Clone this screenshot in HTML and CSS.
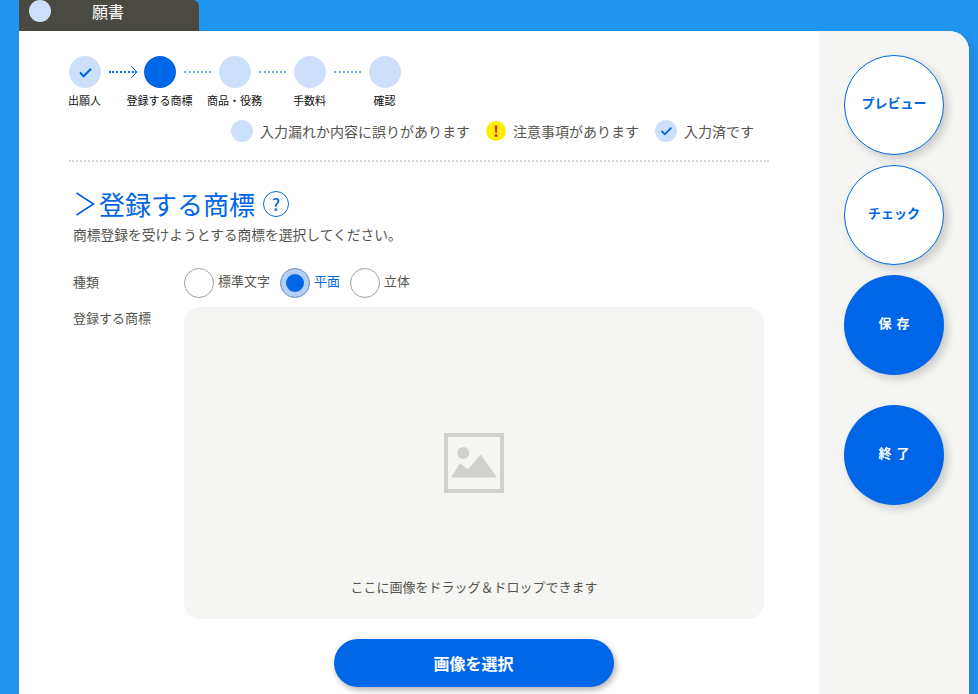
FILE: index.html
```html
<!DOCTYPE html>
<html lang="ja">
<head>
<meta charset="utf-8">
<title>願書</title>
<link rel="stylesheet" href="styles.css">
</head>
<body>
<div class="page">
  <div class="tab"><span class="tab-dot"></span><span class="tab-title">願書</span></div>
  <div class="card">
    <main class="main">
      <div class="track">
        <span class="step step-done"><svg class="check" viewBox="0 0 16 12" width="15" height="11"><path d="M2 6l4 4 8-8" fill="none" stroke="#0066e8" stroke-width="2.400"/></svg></span>
        <span class="link link-done"><svg class="arrow" viewBox="0 0 8 14" width="8" height="14"><path d="M1 1l6 6-6 6" fill="none" stroke="#0066e8" stroke-width="1"/></svg></span>
        <span class="step step-current"></span>
        <span class="link"></span>
        <span class="step"></span>
        <span class="link"></span>
        <span class="step"></span>
        <span class="link"></span>
        <span class="step"></span>
      </div>
      <div class="labels">
        <span>出願人</span><span>登録する商標</span><span>商品・役務</span><span>手数料</span><span>確認</span>
      </div>
      <div class="legend">
        <span class="legend-item"><span class="legend-dot"></span>入力漏れか内容に誤りがあります</span>
        <span class="legend-item legend-warn"><span class="warn-dot">!</span>注意事項があります</span>
        <span class="legend-item"><span class="legend-dot legend-check"><svg viewBox="0 0 14 11" width="13" height="10"><path d="M1.500 5.500l3.800 3.600 7-7.400" fill="none" stroke="#0066e8" stroke-width="2"/></svg></span>入力済です</span>
      </div>
      <hr class="rule">
      <h1 class="heading">
        <svg class="chevron" viewBox="0 0 20 26" width="20" height="26"><path d="M1.500 2l17 11-17 11" fill="none" stroke="#0066e8" stroke-width="1.700"/></svg>
        <span>登録する商標</span><span class="help">?</span>
      </h1>
      <p class="lead">商標登録を受けようとする商標を選択してください。</p>
      <div class="row row-kind">
        <span class="row-label">種類</span>
        <div class="radios">
          <span class="radio-item"><span class="radio"></span><span class="radio-text">標準文字</span></span>
          <span class="radio-item radio-on"><span class="radio"></span><span class="radio-text">平面</span></span>
          <span class="radio-item"><span class="radio"></span><span class="radio-text">立体</span></span>
        </div>
      </div>
      <div class="row row-mark">
        <span class="row-label">登録する商標</span>
        <div class="drop">
          <svg class="placeholder" viewBox="0 0 60 60" width="60" height="60">
            <rect x="2" y="2" width="56" height="56" fill="none" stroke="#d0d0ce" stroke-width="4"/>
            <circle cx="19.300" cy="20" r="6" fill="#d0d0ce"/>
            <path d="M8 44L16 31 24 37 36.500 22 52 44z" fill="#d0d0ce" stroke="#d0d0ce" stroke-width="1" stroke-linejoin="round"/>
          </svg>
          <p class="drop-text">ここに画像をドラッグ＆ドロップできます</p>
        </div>
      </div>
      <div class="action"><button class="select-btn">画像を選択</button></div>
    </main>
    <aside class="side">
      <button class="round round-outline">プレビュー</button>
      <button class="round round-outline">チェック</button>
      <button class="round round-solid">保 存</button>
      <button class="round round-solid round-gap">終 了</button>
    </aside>
  </div>
</div>
</body>
</html>
```
FILE: styles.css
```css
* { box-sizing: border-box; }
html, body { margin: 0; height: 100%; }
body {
  background: #2196f0;
  overflow: hidden;
  font-family: "Noto Sans CJK JP", "Noto Sans", sans-serif;
  color: #55554e;
}
.page { width: 978px; height: 694px; padding: 0 9px 0 19px; overflow: hidden; }
.tab {
  width: 180px; height: 31px; background: #4a4a42;
  border-top-right-radius: 6px;
  display: flex; align-items: flex-start; padding-left: 10px; color: #fff;
}
.tab-dot { width: 22px; height: 22px; border-radius: 50%; background: #cde0fb; }
.tab-title { margin-left: 41px; font-size: 16px; line-height: 22px; }
.card {
  display: flex; height: 700px; background: #fff;
  border-top-right-radius: 20px; overflow: hidden;
  box-shadow: 4px 4px 10px rgba(0,0,0,.12);
}
.main { width: 800px; padding: 25px 50px 0 50px; }
.side {
  width: 150px; background: #f5f5f3; padding-top: 24px;
  display: flex; flex-direction: column; align-items: center; gap: 10px;
}
.track { display: flex; align-items: center; height: 32px; }
.step {
  width: 32px; height: 32px; border-radius: 50%; background: #cde0fb;
  display: flex; align-items: center; justify-content: center; flex: none;
}
.step-current { background: #0066e8; }
.link {
  width: 27px; margin: 0 8px; height: 0; border-top: 2px dotted #6aabf2; position: relative; flex: none;
}
.link-done { width: 28px; border-top-color: #0066e8; margin-right: 7px; }
.arrow { position: absolute; right: -1px; top: -8px; }
.labels { display: flex; margin: 5px 0 0 -22px; height: 14px; }
.labels span { width: 75px; text-align: center; font-size: 11px; line-height: 14px; color: #111; white-space: nowrap; }
.legend { display: flex; justify-content: flex-end; align-items: center; margin: 13px 15px 0 0; height: 22px; font-size: 14px; }
.legend-item { display: flex; align-items: center; margin-left: 16px; white-space: nowrap; }
.legend-dot { width: 22px; height: 22px; border-radius: 50%; background: #cde0fb; margin-right: 7px; display: flex; align-items: center; justify-content: center; }
.warn-dot { width: 20px; height: 20px; border-radius: 50%; background: #ffee00; color: #e0102a; margin-right: 7px; font-size: 15px; font-weight: 700; line-height: 20px; text-align: center; }
.rule { border: 0; border-top: 2px dotted #d6d6d4; margin: 18px 0 0; }
.heading { display: flex; align-items: center; margin: 25px 0 0 6px; font-size: 26px; line-height: 34px; font-weight: 400; color: #0066e8; }
.chevron { margin-right: 4px; flex: none; }
.help { width: 26px; height: 26px; margin-left: 8px; border: 1.500px solid #0066e8; border-radius: 50%; font-size: 17px; font-weight: 500; line-height: 23px; text-align: center; }
.lead { margin: 3px 0 0 4px; font-size: 13.750px; line-height: 20px; }
.row { display: flex; padding-left: 4px; }
.row-label { width: 111px; font-size: 13px; flex: none; line-height: 18px; }
.row-kind { margin-top: 24px; height: 30px; align-items: center; }
.row-kind .row-label { margin-top: -3px; }
.radios { display: flex; gap: 10px; }
.radio-item { display: flex; align-items: center; font-size: 13px; gap: 4px; white-space: nowrap; }
.radio-text { margin-top: -5px; }
.radio { width: 30px; height: 30px; border-radius: 50%; border: 1px solid #a0a09e; background: #fff; }
.radio-on { color: #0066e8; }
.radio-on .radio { background: #0066e8; border-color: #8d9fc0; box-shadow: inset 0 0 0 5px #b3cff8; }
.row-mark { margin-top: 9px; }
.row-mark .row-label { padding-top: 2px; }
.drop {
  width: 580px; height: 312px; background: #f5f5f3; border-radius: 16px;
  display: flex; flex-direction: column; align-items: center; padding-top: 126px;
}
.placeholder { flex: none; display: block; }
.drop-text { margin: 84px 0 0; font-size: 13px; line-height: 20px; }
.action { display: flex; justify-content: center; margin: 20px 0 0 109px; }
.select-btn {
  width: 280px; height: 48px; border: 0; border-radius: 24px; background: #0066e8; color: #fff;
  font: 700 16px "Noto Sans CJK JP", sans-serif; box-shadow: 2px 3px 6px rgba(0,0,0,.3); padding: 0;
}
.round {
  width: 100px; height: 100px; border-radius: 50%; flex: none;
  font-family: "Noto Sans CJK JP", sans-serif; font-weight: 700; font-size: 13px;
  box-shadow: 4px 4px 8px rgba(0,0,0,.18); padding: 0 0 5px;
}
.round-outline { background: #fff; border: 1px solid #0066e8; color: #0066e8; }
.round-solid { background: #0066e8; border: 0; color: #fff; word-spacing: 2px; }
.round-gap { margin-top: 20px; }
```
